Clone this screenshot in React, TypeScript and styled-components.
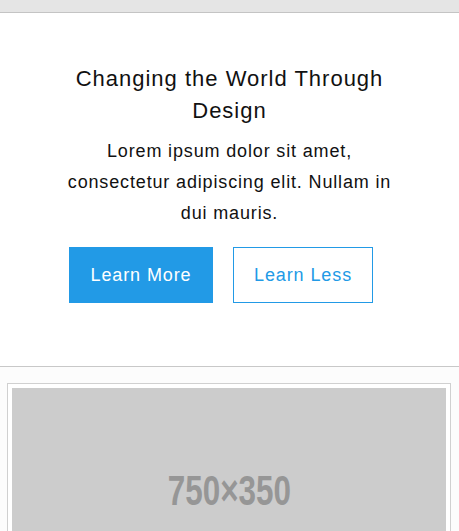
import React from "react";
import styled, { createGlobalStyle } from "styled-components";

const Global = createGlobalStyle`
  html, body { margin: 0; padding: 0; }
  body {
    background: #fcfcfc;
    font-family: "Liberation Sans", Arial, sans-serif;
    color: #111;
  }
`;

const TopBar = styled.div`
  height: 12px;
  background: #e5e5e5;
  border-bottom: 1px solid #c4c4c4;
`;

const Hero = styled.section`
  background: #fff;
  border-bottom: 1px solid #c8c8c8;
  padding: 50px 20px 63px;
  text-align: center;
`;

const Title = styled.h1`
  margin: 0 auto;
  max-width: 360px;
  font-size: 22px;
  font-weight: 400;
  line-height: 32px;
  letter-spacing: 1px;
  color: #111;
`;

const Lead = styled.p`
  margin: 9px auto 0;
  max-width: 345px;
  font-size: 18px;
  line-height: 31px;
  letter-spacing: 0.85px;
  color: #111;
`;

const Actions = styled.div`
  display: flex;
  justify-content: center;
  gap: 20px;
  margin-top: 18px;
  padding-right: 17px;
`;

const Button = styled.a<{ $outline?: boolean }>`
  box-sizing: border-box;
  display: flex;
  align-items: center;
  justify-content: center;
  height: 56px;
  width: ${(p) => (p.$outline ? "140px" : "144px")};
  font-size: 18px;
  letter-spacing: 0.9px;
  text-decoration: none;
  background: ${(p) => (p.$outline ? "#fff" : "#229ae6")};
  color: ${(p) => (p.$outline ? "#229ae6" : "#fff")};
  border: 1px solid #229ae6;
`;

const Gallery = styled.div`
  padding: 16px 8px 0 7px;
`;

const Thumb = styled.div`
  border: 1px solid #d0d0d0;
  padding: 4px;
  background: #fff;
`;

const Placeholder = styled.div`
  aspect-ratio: 750 / 350;
  background: #cccccc;
  display: flex;
  align-items: center;
  justify-content: center;
`;

const PlaceholderLabel = styled.span`
  display: inline-block;
  margin-top: 2px;
  color: #969696;
  font-family: "Liberation Sans", sans-serif;
  font-weight: 700;
  font-size: 43px;
  transform: scaleX(0.73);
`;

export default function App() {
  return (
    <>
      <Global />
      <TopBar />
      <Hero>
        <Title>Changing the World Through Design</Title>
        <Lead>Lorem ipsum dolor sit amet, consectetur adipiscing elit. Nullam in dui mauris.</Lead>
        <Actions>
          <Button href="#">Learn More</Button>
          <Button href="#" $outline>
            Learn Less
          </Button>
        </Actions>
      </Hero>
      <Gallery>
        <Thumb>
          <Placeholder>
            <PlaceholderLabel>750×350</PlaceholderLabel>
          </Placeholder>
        </Thumb>
      </Gallery>
    </>
  );
}
